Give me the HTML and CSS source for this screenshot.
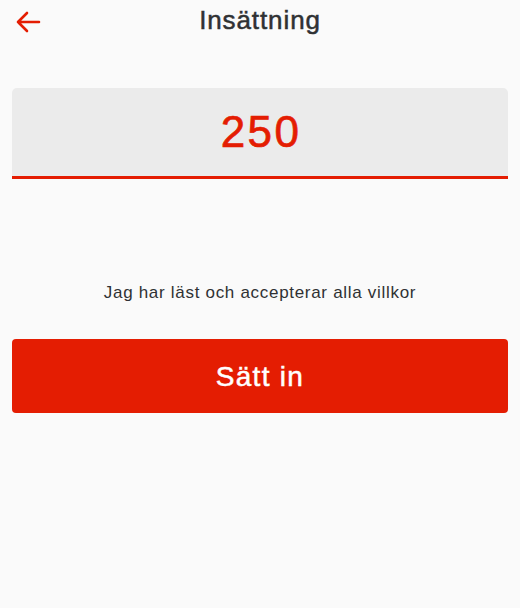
FILE: index.html
```html
<!DOCTYPE html>
<html lang="sv">
<head>
<meta charset="utf-8">
<link rel="stylesheet" href="styles.css">
</head>
<body>
<div class="page">
  <header class="header">
    <button class="back" aria-label="Tillbaka">
      <svg width="26" height="22" viewBox="0 0 26 22"><path d="M12 2 L3 11 L12 20 M3 11 H24" fill="none" stroke="#e41d02" stroke-width="2.6" stroke-linecap="round" stroke-linejoin="round"/></svg>
    </button>
    <h1 class="title">Insättning</h1>
  </header>
  <div class="amount">250</div>
  <p class="terms">Jag har läst och accepterar alla villkor</p>
  <button class="submit">Sätt in</button>
</div>
</body>
</html>
```
FILE: styles.css
```css
html, body { margin: 0; padding: 0; background: #fafafa; }
body { font-family: "Liberation Sans", Arial, sans-serif; color: #2f3133; }
.page { display: flex; flex-direction: column; padding: 0 12px; }
.header { position: relative; height: 44px; display: flex; align-items: center; justify-content: center; }
.back { position: absolute; left: 3px; top: 11px; background: none; border: 0; padding: 0; width: 30px; height: 22px; display: flex; }
.title { margin: 0 0 4px; font-size: 26px; font-weight: 400; -webkit-text-stroke: 0.5px #2f3133; color: #2f3133; letter-spacing: 0.9px; }
.amount { margin-top: 44px; height: 88px; background: #ebebeb; border-radius: 5px 5px 0 0; border-bottom: 3px solid #e41d02; display: flex; align-items: center; justify-content: center; font-size: 44px; color: #e41d02; -webkit-text-stroke: 0.7px #e41d02; letter-spacing: 2.4px; padding-left: 2px; }
.terms { margin: 104px 0 0; text-align: center; font-size: 17px; color: #2f3133; line-height: 20px; letter-spacing: 0.7px; }
.submit { margin-top: 36px; height: 74px; background: #e41d02; border: 0; border-radius: 4px; color: #fff; font-family: inherit; font-size: 28px; -webkit-text-stroke: 0.5px #fff; letter-spacing: 1.3px; padding-top: 2px; }
```
